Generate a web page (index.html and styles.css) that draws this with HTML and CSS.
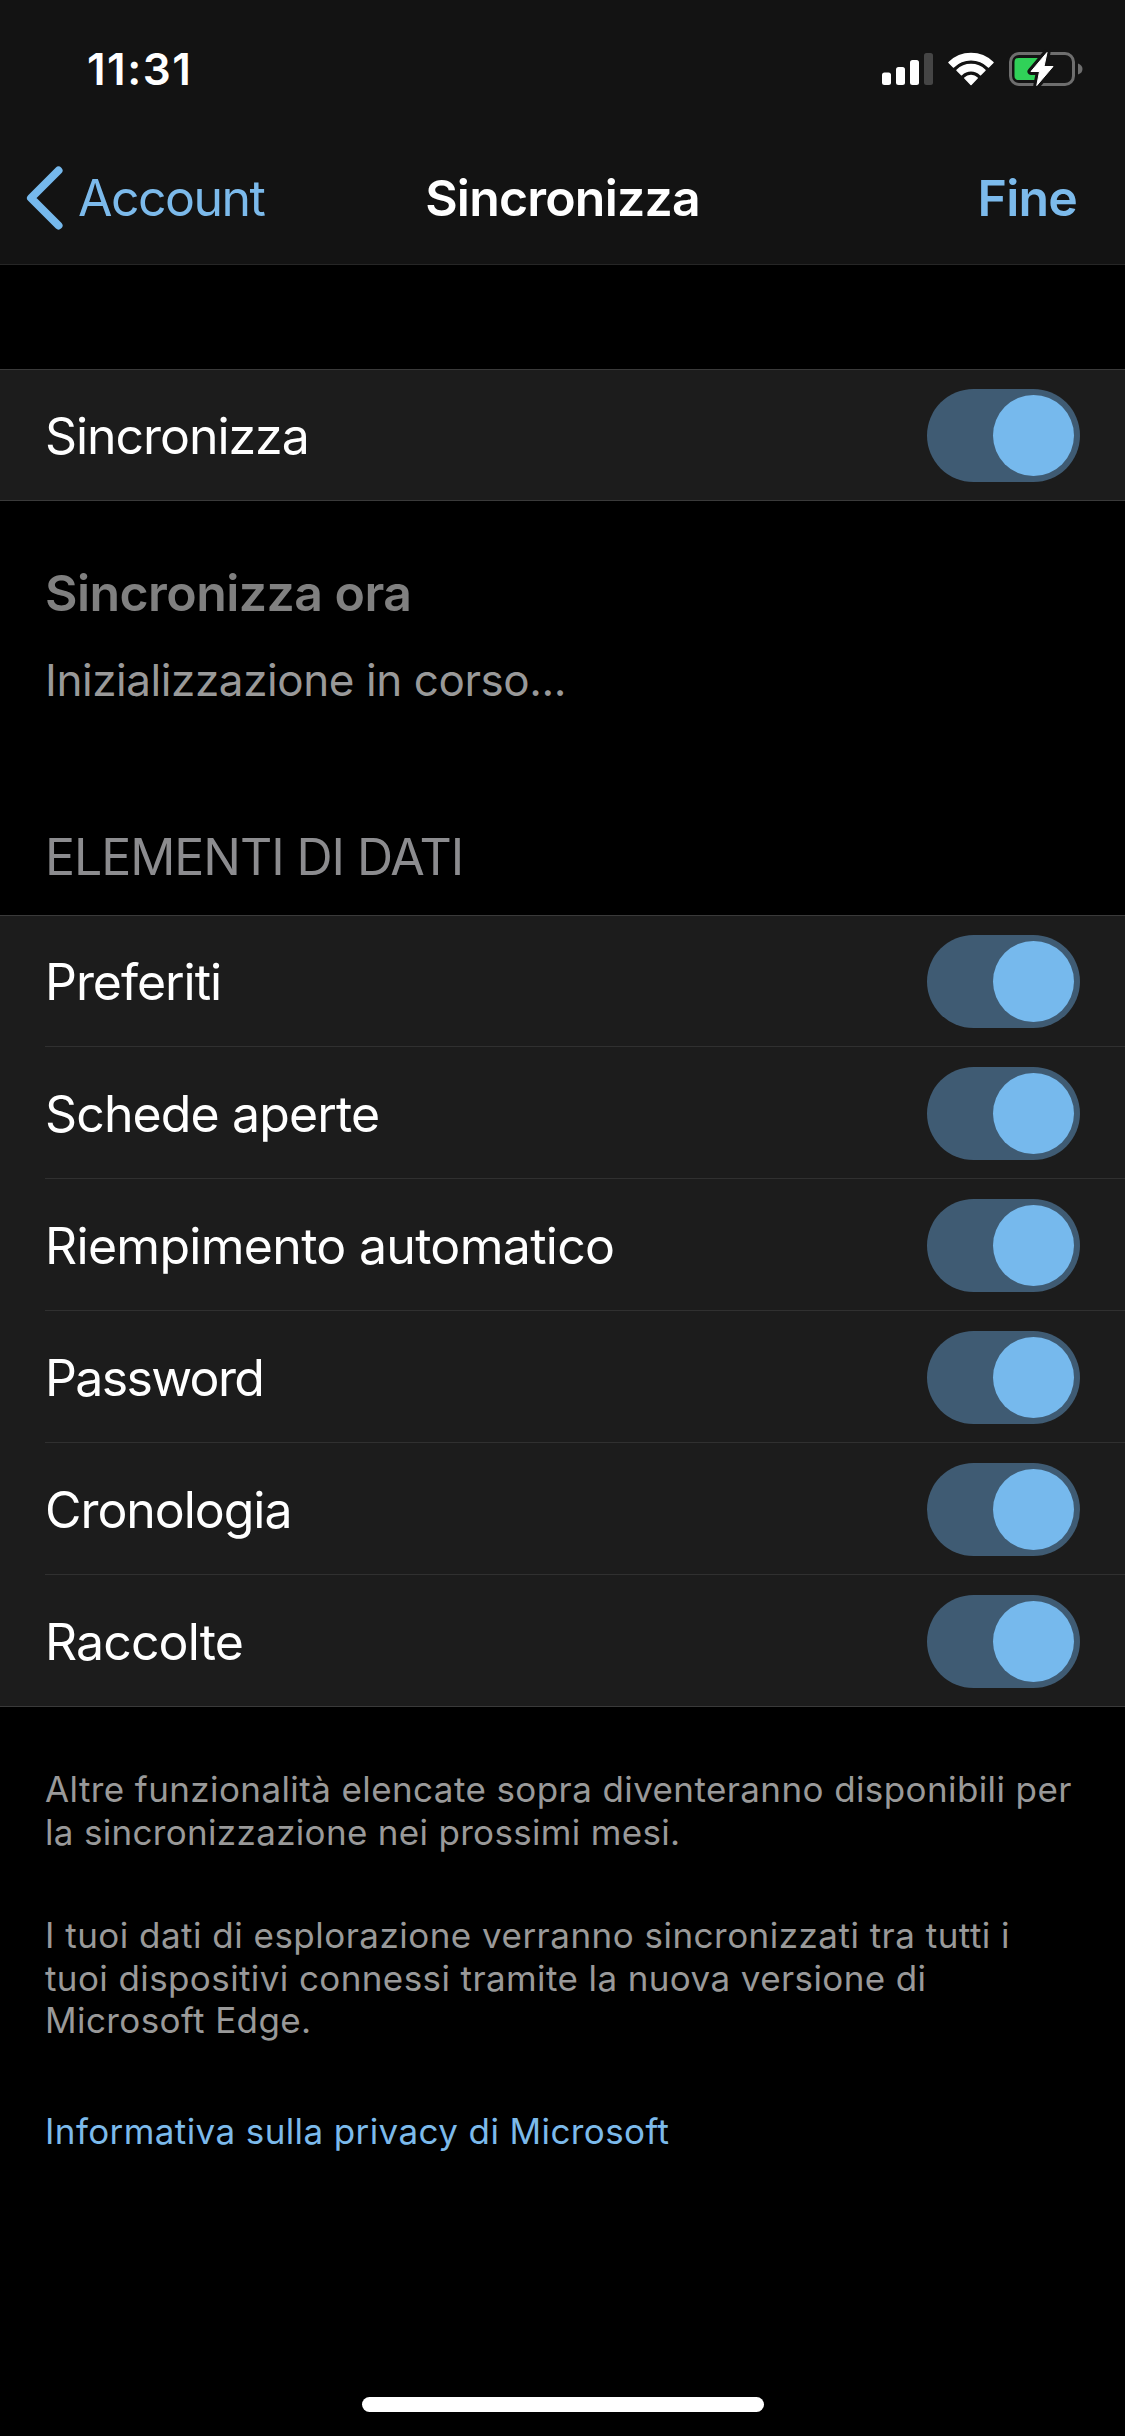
FILE: index.html
```html
<!DOCTYPE html>
<html lang="it">
<head>
<meta charset="utf-8">
<title>Sincronizza</title>
<link rel="stylesheet" href="styles.css">
</head>
<body>
<div class="screen">
  <header class="top">
    <div class="status-bar">
      <span class="time">11:31</span>
      <div class="status-icons">
        <svg class="signal" width="52" height="34" viewBox="0 0 52 34">
          <rect x="0" y="20.500" width="9" height="12.500" rx="2.500" fill="#fff"/>
          <rect x="14" y="15" width="9" height="18" rx="2.500" fill="#fff"/>
          <rect x="28" y="8" width="9" height="25" rx="2.500" fill="#fff"/>
          <rect x="42" y="1" width="9" height="32" rx="2.500" fill="#454545"/>
        </svg>
        <svg class="wifi" width="46" height="34" viewBox="0 0 46 34">
          <g fill="#fff" stroke="#fff" stroke-width="1.500" stroke-linejoin="round">
            <path d="M1 10.500A31.500 31.500 0 0 1 45 10.500L40.500 15A25 25 0 0 0 5.500 15Z"/>
            <path d="M9 18.200A20 20 0 0 1 37 18.200L32.500 22.700A13.500 13.500 0 0 0 13.500 22.700Z"/>
            <path d="M16.800 26A9 9 0 0 1 29.200 26L23 32.500Z"/>
          </g>
        </svg>
        <svg class="battery" width="74" height="36" viewBox="0 0 74 36">
          <rect x="1.500" y="2.500" width="63" height="31" rx="8.500" fill="none" stroke="#6e6e6e" stroke-width="3"/>
          <path d="M69 12.500Q73.500 14 73.500 18T69 23.500Z" fill="#6e6e6e"/>
          <rect x="5.500" y="7" width="27" height="22" rx="4" fill="#30d158"/>
          <path class="bolt-gap" d="M38 1.500L22 20.500H30.500L27.800 34.500L44 15.500H35Z"/>
          <path class="bolt" d="M38 1.500L22 20.500H30.500L27.800 34.500L44 15.500H35Z"/>
        </svg>
      </div>
    </div>
    <nav class="nav-bar">
      <a class="back"><svg width="38" height="64" viewBox="0 0 38 64"><path d="M32.500 4.500L5 32L32.500 59.500" fill="none" stroke="#76b9ed" stroke-width="8" stroke-linecap="round" stroke-linejoin="round"/></svg><span>Account</span></a>
      <h1 class="title">Sincronizza</h1>
      <a class="done">Fine</a>
    </nav>
  </header>
  <main>
    <section class="group">
      <div class="row"><span class="label">Sincronizza</span><span class="switch"></span></div>
    </section>
    <section class="sync">
      <p class="sync-now">Sincronizza ora</p>
      <p class="sync-state">Inizializzazione in corso...</p>
    </section>
    <h2 class="heading">ELEMENTI DI DATI</h2>
    <section class="group">
      <div class="row"><span class="label">Preferiti</span><span class="switch"></span></div>
      <div class="row"><span class="label label-medium">Schede aperte</span><span class="switch"></span></div>
      <div class="row"><span class="label label-long">Riempimento automatico</span><span class="switch"></span></div>
      <div class="row"><span class="label label-tight">Password</span><span class="switch"></span></div>
      <div class="row"><span class="label">Cronologia</span><span class="switch"></span></div>
      <div class="row"><span class="label label-medium">Raccolte</span><span class="switch"></span></div>
    </section>
    <section class="notes">
      <p>Altre funzionalità elencate sopra diventeranno disponibili per<br><span class="snug">la sincronizzazione nei prossimi mesi.</span></p>
      <p><span class="loose">I tuoi dati di esplorazione verranno sincronizzati tra tutti i</span><br>tuoi dispositivi connessi tramite la nuova versione di<br>Microsoft Edge.</p>
      <a class="privacy">Informativa sulla privacy di Microsoft</a>
    </section>
  </main>
  <div class="home-indicator"></div>
</div>
</body>
</html>
```
FILE: styles.css
```css
* { box-sizing: border-box; margin: 0; padding: 0; }
body { background: #000; color: #fff; font-family: Inter, "Liberation Sans", sans-serif; }
.screen { width: 1125px; height: 2436px; display: flex; flex-direction: column; padding-bottom: 24px; overflow: hidden; }

/* Status bar and navigation */
.top { background: #131313; border-bottom: 1px solid #262626; height: 265px; }
.status-bar { height: 132px; padding: 6px 42px 0 87px; display: flex; align-items: center; justify-content: space-between; }
.time { font-size: 44px; font-weight: 600; letter-spacing: 1.500px; }
.status-icons { display: flex; align-items: center; }
.wifi { margin-left: 14px; }
.battery { margin-left: 15px; overflow: visible; }
.bolt { fill: #fff; stroke: #fff; stroke-width: 1px; stroke-linejoin: round; }
.bolt-gap { fill: #131313; stroke: #131313; stroke-width: 7px; stroke-linejoin: round; }
.nav-bar { height: 132px; padding: 0 26px; display: grid; grid-template-columns: 1fr auto 1fr; align-items: center; font-size: 50px; line-height: 60px; }
.back { display: flex; align-items: center; gap: 14px; color: #7cbaeb; letter-spacing: -1.550px; }
.title { font-size: 50px; font-weight: 600; letter-spacing: -0.800px; }
.done { justify-self: end; margin-right: 22px; color: #7cbaeb; font-weight: 600; letter-spacing: -0.800px; }

/* Grouped lists */
main { padding-top: 104px; }
.group { background: #1c1c1c; border-top: 1px solid #3a3a3a; border-bottom: 1px solid #3a3a3a; }
.row { height: 132px; display: flex; align-items: center; justify-content: space-between; margin-left: 45px; padding: 2px 45px 0 0; border-bottom: 1px solid #303030; }
.row:first-child { height: 131px; padding-top: 1px; }
.row:last-child { height: 131px; border-bottom: 0; }
.row:only-child { height: 130px; }
.label { font-size: 50px; line-height: 60px; letter-spacing: -1.050px; }
.label-medium { letter-spacing: -0.880px; }
.label-long { letter-spacing: -0.700px; }
.label-tight { letter-spacing: -1.650px; }
.switch { width: 153px; height: 93px; border-radius: 47px; background: #3f5b73; display: flex; align-items: center; justify-content: flex-end; padding-right: 6px; }
.switch::before { content: ""; width: 81px; height: 81px; border-radius: 50%; background: #76b9ed; }

/* Sync state */
.sync { padding: 62px 45px 0; }
.sync-now { font-size: 50px; line-height: 60px; font-weight: 600; color: #808080; letter-spacing: -0.550px; }
.sync-state { font-size: 44px; line-height: 54px; margin-top: 30px; color: #999; letter-spacing: -0.420px; }
.heading { margin: 120px 45px 28px; font-size: 50px; line-height: 60px; font-weight: 400; color: #8c8c8f; letter-spacing: -1.050px; }

/* Footer notes */
.notes { padding: 61px 45px 0; font-size: 35px; line-height: 42.500px; color: #999; letter-spacing: 0.400px; }
.notes p + p { margin-top: 61px; }
.snug { letter-spacing: 0.320px; }
.loose { letter-spacing: 0.480px; }
.privacy { display: block; margin-top: 68px; color: #7cbaeb; }
.home-indicator { width: 402px; height: 15px; border-radius: 8px; background: #fff; margin: auto auto 0; }
```
